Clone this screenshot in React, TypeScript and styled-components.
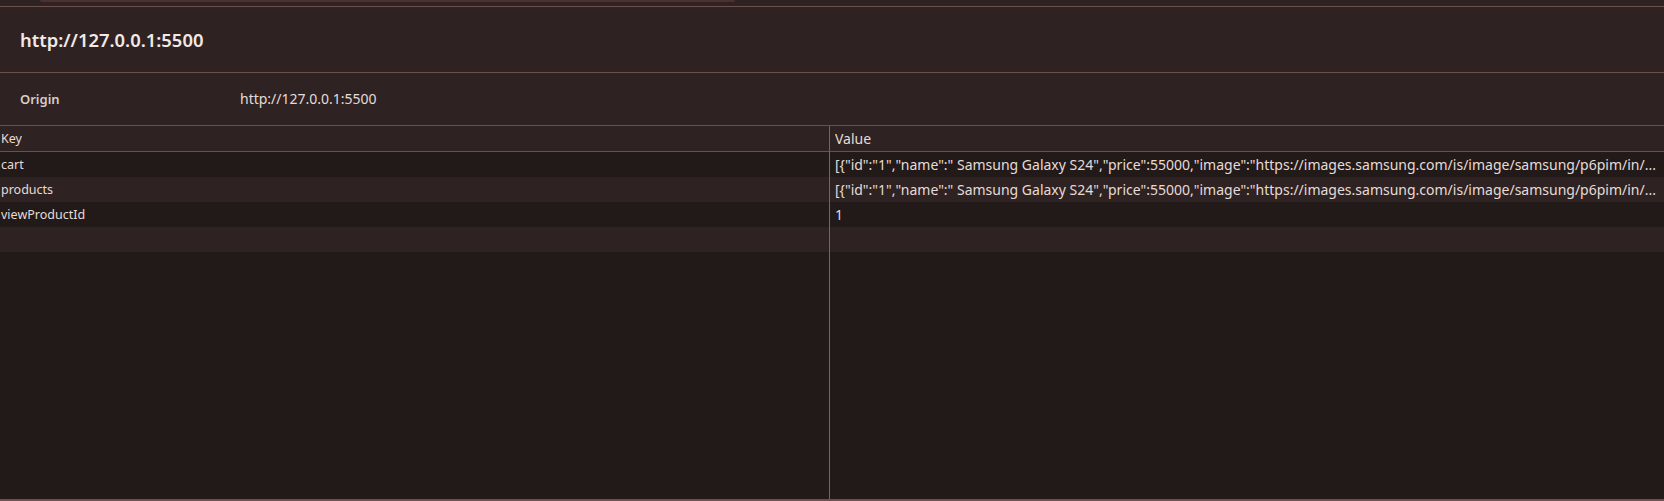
import React from "react";
import styled, { createGlobalStyle } from "styled-components";

const Global = createGlobalStyle`
  html, body { margin: 0; padding: 0; background: #2e2322; }
  #root { height: 501px; }
  * { box-sizing: border-box; }
`;

const Page = styled.div`
  height: 501px;
  display: flex;
  flex-direction: column;
  background: #2e2322;
  font-family: "Noto Sans", "Open Sans", sans-serif;
  color: #e6dbd8;
  overflow: hidden;
`;

const TopStrip = styled.div`
  height: 6px;
  padding-left: 40px;
  border-bottom: 1px solid #6e4f4c;
  box-sizing: content-box;
`;

const StripTab = styled.div`
  width: 695px;
  height: 2px;
  background: #4d3031;
  border-bottom-left-radius: 3px;
  border-bottom-right-radius: 3px;
`;

const TitleBar = styled.div`
  height: 66px;
  display: flex;
  align-items: center;
  padding-left: 20px;
  padding-bottom: 1px;
  border-bottom: 1px solid #6e4f4c;
  font-size: 18.4px;
  font-weight: 600;
  color: #f2e9e6;
`;

const OriginRow = styled.div`
  height: 53px;
  display: grid;
  grid-template-columns: 220px 1fr;
  align-items: center;
  padding-left: 20px;
  padding-bottom: 1px;
  border-bottom: 1px solid #6e4f4c;
`;

const OriginLabel = styled.span`
  font-size: 13px;
  font-weight: 600;
  color: #d9ccc9;
`;

const OriginValue = styled.span`
  font-size: 14px;
  color: #e6dbd8;
`;

const Table = styled.div`
  flex: 1;
  display: grid;
  grid-template-columns: 829px 1fr;
  grid-template-rows: 26px repeat(4, 25px) 1fr;
  border-bottom: 2px solid #6e4f4c;
  background: #221a19;
`;

const Cell = styled.div<{ $tone: "head" | "dark" | "light"; $value?: boolean }>`
  display: flex;
  align-items: center;
  min-width: 0;
  padding-left: ${(p) => (p.$value ? "5px" : "1px")};
  padding-right: 4px;
  font-size: ${(p) => (p.$value ? "14px" : "12.5px")};
  color: #e6dbd8;
  white-space: nowrap;
  background: ${(p) => (p.$tone === "dark" ? "#221a19" : "#2e2322")};
  border-left: ${(p) => (p.$value ? "1px solid #7a6461" : "none")};
  border-bottom: ${(p) => (p.$tone === "head" ? "1px solid #6e4f4c" : "none")};
`;

const CellText = styled.span`
  overflow: hidden;
  text-overflow: ellipsis;
  min-width: 0;
`;

const Filler = styled.div<{ $value?: boolean }>`
  background: #221a19;
  border-left: ${(p) => (p.$value ? "1px solid #7a6461" : "none")};
`;

const cartValue =
  '[{"id":"1","name":" Samsung Galaxy S24","price":55000,"image":"https://images.samsung.com/is/image/samsung/p6pim/in/...';

const rows: { key: string; value: string }[] = [
  { key: "cart", value: cartValue },
  { key: "products", value: cartValue },
  { key: "viewProductId", value: "1" },
  { key: "", value: "" },
];

export default function App() {
  return (
    <Page>
      <Global />
      <TopStrip>
        <StripTab />
      </TopStrip>
      <TitleBar>http://127.0.0.1:5500</TitleBar>
      <OriginRow>
        <OriginLabel>Origin</OriginLabel>
        <OriginValue>http://127.0.0.1:5500</OriginValue>
      </OriginRow>
      <Table>
        <Cell $tone="head">
          <CellText>Key</CellText>
        </Cell>
        <Cell $tone="head" $value>
          <CellText>Value</CellText>
        </Cell>
        {rows.map((r, i) => {
          const tone = i % 2 === 0 ? "dark" : "light";
          return (
            <React.Fragment key={i}>
              <Cell $tone={tone}>
                <CellText>{r.key}</CellText>
              </Cell>
              <Cell $tone={tone} $value>
                <CellText>{r.value}</CellText>
              </Cell>
            </React.Fragment>
          );
        })}
        <Filler />
        <Filler $value />
      </Table>
    </Page>
  );
}
